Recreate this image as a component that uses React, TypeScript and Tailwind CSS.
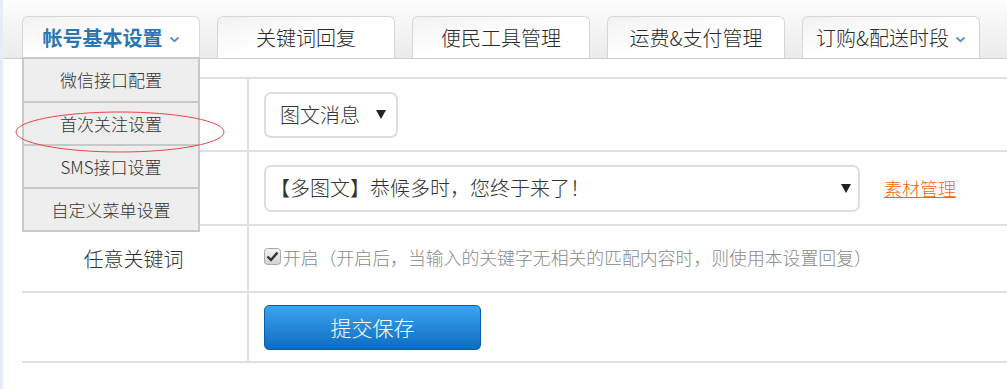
import React from "react";

const font = { fontFamily: '"Noto Sans CJK SC", "Noto Sans", sans-serif' };

function Chevron() {
  return (
    <svg width="11" height="7" viewBox="0 0 11 7" className="ml-[6px] mt-[4px]">
      <path d="M1.5 1.5 L5.5 5.2 L9.5 1.5" fill="none" stroke="#5b93c7" strokeWidth="2" />
    </svg>
  );
}

function Tab({ label, active, chevron }: { label: string; active?: boolean; chevron?: boolean }) {
  return (
    <div className="w-[178px] h-[42px] shrink-0 rounded-t-[6px] border border-b-0 border-[#d6d6d6] bg-gradient-to-br from-[#f2f2f2] via-white to-white flex items-center justify-center">
      <span
        className={
          active
            ? "text-[20px] font-bold text-[#2b76b2] leading-none"
            : "text-[20px] font-light text-[#2a2a2a] leading-none"
        }
      >
        {label}
      </span>
      {chevron && <Chevron />}
    </div>
  );
}

function Arrow() {
  return (
    <svg width="10" height="9" viewBox="0 0 10 9">
      <path d="M0 0 L10 0 L5 9 Z" fill="#222" />
    </svg>
  );
}

export default function App() {
  return (
    <div className="w-[1007px] h-[389px] overflow-hidden bg-white flex font-light" style={font}>
      <div className="w-[3px] shrink-0 bg-[#e8edf5]" />
      <div className="relative flex-1">
        {/* header */}
        <div className="h-[59px] border-b border-[#cfcfcf] bg-gradient-to-b from-[#fdfdfd] to-[#ebebeb] pt-[16px] pl-[19px] flex gap-[17px]">
          <Tab label="帐号基本设置" active chevron />
          <Tab label="关键词回复" />
          <Tab label="便民工具管理" />
          <Tab label="运费&支付管理" />
          <Tab label="订购&配送时段" chevron />
        </div>

        {/* table */}
        <div className="ml-[19px] mt-[18px]">
          <div className="flex h-[73px] border-t-2 border-[#e0e0e0]">
            <div className="w-[227px] border-r-2 border-[#e0e0e0]" />
            <div className="flex items-center pl-[15px]">
              <div className="w-[134px] h-[46px] border-2 border-[#dedede] rounded-[7px] flex items-center pl-[14px] pr-[10px] justify-between">
                <span className="text-[20px] text-[#333] leading-none">图文消息</span>
                <Arrow />
              </div>
            </div>
          </div>
          <div className="flex h-[74px] border-t-2 border-[#e0e0e0]">
            <div className="w-[227px] border-r-2 border-[#e0e0e0]" />
            <div className="flex items-center pl-[15px]">
              <div className="w-[596px] h-[47px] border-2 border-[#dedede] rounded-[7px] flex items-center pl-[4px] pr-[7px] justify-between">
                <span className="text-[20px] text-[#333] leading-none">【多图文】恭候多时，您终于来了！</span>
                <Arrow />
              </div>
              <a className="ml-[24px] text-[18px] text-[#ff6600] underline leading-none">素材管理</a>
            </div>
          </div>
          <div className="flex h-[67px] border-t-2 border-[#e0e0e0]">
            <div className="w-[227px] border-r-2 border-[#e0e0e0] flex items-center justify-center">
              <span className="text-[20px] text-[#333] leading-none pr-[2px]">任意关键词</span>
            </div>
            <div className="flex items-center pl-[15px] pb-[2px]">
              <svg width="17" height="17" viewBox="0 0 17 17" className="mb-[3px]">
                <defs>
                  <linearGradient id="cb" x1="0" y1="0" x2="0" y2="1">
                    <stop offset="0" stopColor="#f4f4f4" />
                    <stop offset="1" stopColor="#d2d2d2" />
                  </linearGradient>
                </defs>
                <rect x="0.5" y="0.5" width="16" height="16" rx="3" fill="url(#cb)" stroke="#a8a8a8" />
                <path d="M3.5 8.5 L7 12 L13.5 4.5" fill="none" stroke="#333" strokeWidth="2.4" />
              </svg>
              <span className="ml-[2px] text-[17.85px] text-[#8a8a8a] leading-none">
                开启（开启后，当输入的关键字无相关的匹配内容时，则使用本设置回复）
              </span>
            </div>
          </div>
          <div className="flex h-[72px] border-t-2 border-b-2 border-[#e0e0e0]">
            <div className="w-[227px] border-r-2 border-[#e0e0e0]" />
            <div className="flex items-center pl-[15px]">
              <button className="w-[217px] h-[45px] rounded-[5px] border border-[#0b5ea6] bg-gradient-to-b from-[#3ba4f2] to-[#0a6dc0] text-white text-[21px] leading-none flex items-center justify-center">
                提交保存
              </button>
            </div>
          </div>
        </div>

        {/* dropdown */}
        <div className="absolute left-[19px] top-[57px] w-[178px] border-2 border-[#c8c8c8] bg-[#eeeeee]">
          {["微信接口配置", "首次关注设置", "SMS接口设置", "自定义菜单设置"].map((t, i) => (
            <div
              key={t}
              className={
                i === 0
                  ? "h-[42px] flex items-center justify-center text-[17px] text-[#333]"
                  : "h-[43px] border-t-2 border-[#c8c8c8] flex items-center justify-center text-[17px] text-[#333]"
              }
            >
              {t}
            </div>
          ))}
        </div>

        {/* red ellipse */}
        <svg className="absolute left-[12px] top-[110px] pointer-events-none" width="212" height="44" viewBox="0 0 212 44">
          <ellipse cx="105" cy="22" rx="104" ry="20" fill="none" stroke="#e8474a" strokeWidth="1" />
        </svg>
      </div>
    </div>
  );
}
